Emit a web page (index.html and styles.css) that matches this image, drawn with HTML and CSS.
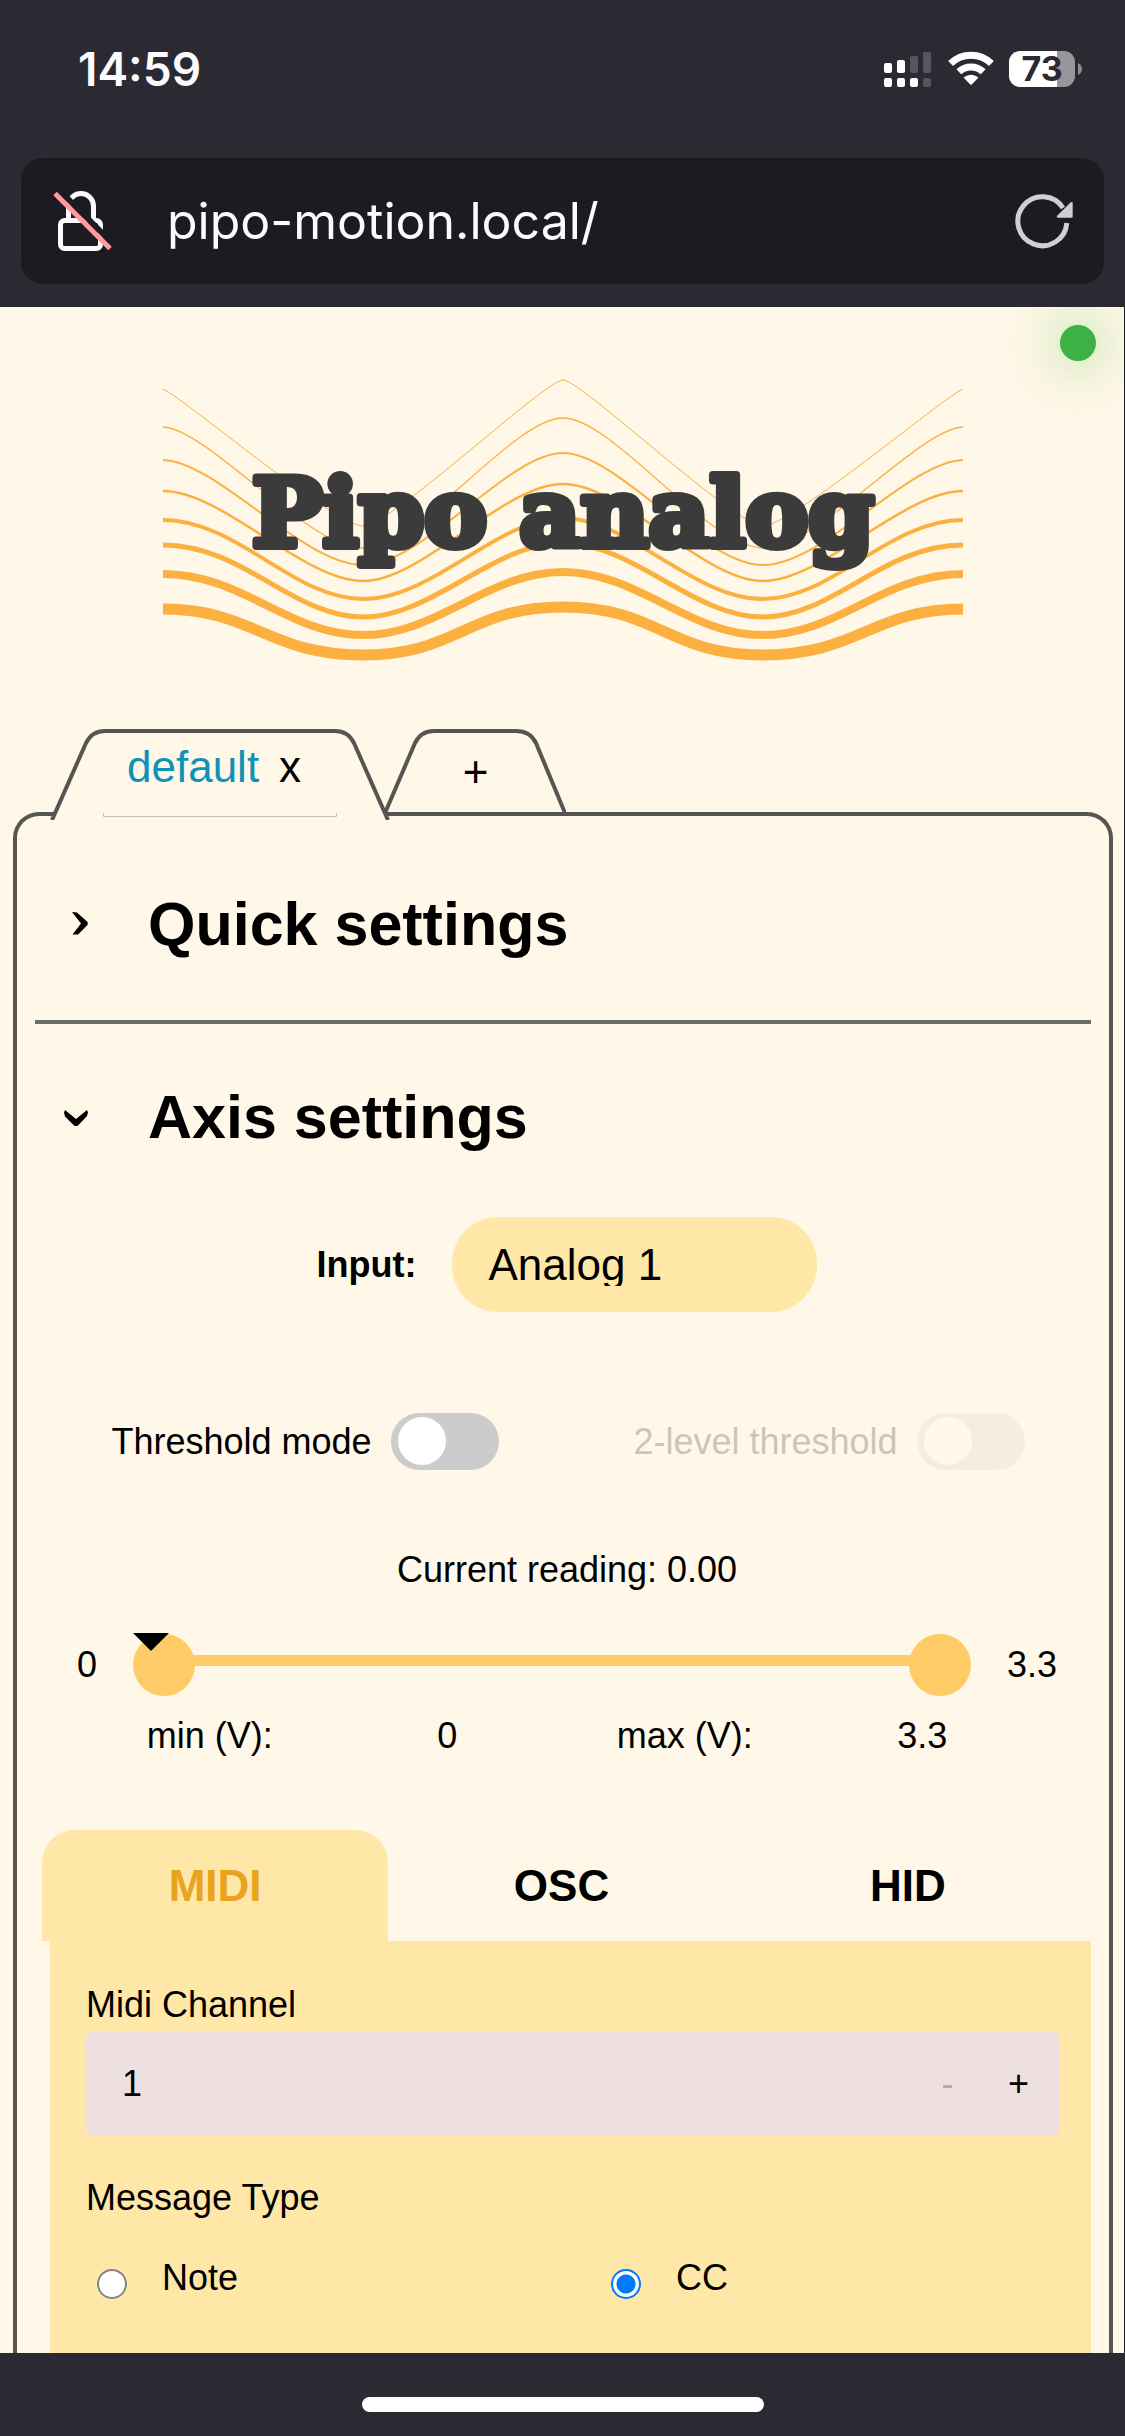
FILE: index.html
```html
<!DOCTYPE html>
<html lang="en">
<head>
<meta charset="utf-8">
<meta name="viewport" content="width=device-width, initial-scale=1">
<title>Pipo analog</title>
<link rel="stylesheet" href="styles.css">
</head>
<body>
<header class="browser">
  <div class="status">
    <span class="clock">14:59</span>
    <div class="indicators">
      <svg class="signal" width="50" height="36" viewBox="0 0 50 36" aria-hidden="true">
        <g fill="#fff"><rect x="2" y="12" width="8" height="10" rx="2"/><rect x="15" y="9" width="8" height="13" rx="2"/><rect x="2" y="27" width="8" height="9" rx="2"/><rect x="15" y="27" width="8" height="9" rx="2"/><rect x="28" y="27" width="8" height="9" rx="2"/></g>
        <g fill="#57555f"><rect x="28" y="5" width="8" height="17" rx="2"/><rect x="41" y="1" width="8" height="21" rx="2"/><rect x="41" y="27" width="8" height="9" rx="2"/></g>
      </svg>
      <svg class="wifi" width="46" height="36" viewBox="0 -1 46 36" aria-hidden="true">
        <path d="M2.600 11.600A29 29 0 0 1 43.400 11.600M10.800 19.800A18 18 0 0 1 35.200 19.800" fill="none" stroke="#fff" stroke-width="7"/>
        <path d="M15.500 25.500Q23 20 30.500 25.500L24 32.300Q23 33.300 22 32.300Z" fill="#fff"/>
      </svg>
      <span class="battery">73</span>
      <svg width="5" height="12" viewBox="0 0 5 12" aria-hidden="true"><path d="M0 0Q4 2 4 6T0 12Z" fill="#8f8e93"/></svg>
    </div>
  </div>
  <div class="urlbar">
    <svg width="62" height="66" viewBox="0 0 62 66" fill="none" aria-hidden="true">
      <rect x="8.500" y="32.500" width="40" height="28" rx="4" stroke="#fbfbfe" stroke-width="5"/>
      <path d="M16.500 32V18A12.500 12.500 0 0 1 41.500 18V32" stroke="#fbfbfe" stroke-width="5"/>
      <path d="M6 1L62 57" stroke="#1c1b22" stroke-width="6"/>
      <path d="M3 5.500L58 60.500" stroke="#ff9aa2" stroke-width="5"/>
    </svg>
    <span class="address">pipo-motion.local/</span>
    <button class="reload" type="button" aria-label="Reload">
      <svg width="60" height="56" viewBox="0 0 60 56" aria-hidden="true">
        <path d="M52.800 30A24.500 24.500 0 1 1 49 15" fill="none" stroke="#cfcfd8" stroke-width="5"/>
        <path d="M58.700 10V23.500Q58.700 24.700 57.500 24.700H44Q42 24.300 43.200 22.800L56.500 9.600Q58.700 8 58.700 10Z" fill="#cfcfd8"/>
      </svg>
    </button>
  </div>
</header>

<main class="page">
  <span class="online" role="img" aria-label="Connected"></span>
  <svg class="logo" width="800" height="290" viewBox="0 0 800 290" role="img" aria-label="Pipo analog">
    <g fill="none" stroke="#fbb040">
      <path stroke-width="1" d="M0 14C22 24 172 151 200 151S382 5 400 5S572 151 600 151S778 24 800 14"/>
      <path stroke-width="1.300" d="M0 52C45 54 145 173 200 173S350 43 400 43S545 173 600 173S755 54 800 52"/>
      <path stroke-width="2" d="M0 85C55 87 140 190 200 190S345 78 400 78S540 190 600 190S745 87 800 85"/>
      <path stroke-width="2.500" d="M0 116C60 116 140 206 200 206S340 109 400 109S540 206 600 206S740 116 800 116"/>
      <path stroke-width="3.800" d="M0 145C75 145 130 224 200 224S335 143 400 143S530 224 600 224S725 145 800 145"/>
      <path stroke-width="5" d="M0 170C80 170 130 242 200 242S330 168 400 168S530 242 600 242S720 170 800 170"/>
      <path stroke-width="8" d="M0 199C80 199 125 260 200 260S325 197 400 197S525 260 600 260S720 199 800 199"/>
      <path stroke-width="11" d="M0 234C90 234 105 280 200 280S305 232 400 232S505 280 600 280S710 234 800 234"/>
    </g>
    <text class="wordmark" x="400" y="171" text-anchor="middle">Pipo analog</text>
  </svg>

  <nav class="profiles" aria-label="Profiles">
    <div class="profile current">
      <svg class="shape" width="340" height="91" viewBox="0 0 340 91" aria-hidden="true">
        <path d="M2 91L36 14Q42 2 55 2H285Q298 2 304 14L338 91" fill="#fff7e8" stroke="#555552" stroke-width="4"/>
        <path d="M53.500 84V87.500H286.500V84" fill="none" stroke="#c9c2b4"/>
      </svg>
      <button class="name" type="button">default</button>
      <button type="button" aria-label="Close profile">x</button>
    </div>
    <button class="profile add" type="button" aria-label="Add profile">
      <svg class="shape" width="181" height="85" viewBox="0 0 181 85" aria-hidden="true">
        <path d="M0 84L30 14Q36 2 49 2H131Q145 2 151 14L180 84" fill="none" stroke="#555552" stroke-width="4"/>
      </svg>
      <span class="plus">+</span>
    </button>
  </nav>

  <section class="panel">
    <h2><button class="fold" type="button" aria-expanded="false">
      <svg width="24" height="26" viewBox="0 0 24 26" aria-hidden="true"><path d="M8 1L13 1.500L23.500 11Q24 12.500 23.500 14L14 23.500H8.500L17 12.500Z"/></svg>
      Quick settings</button></h2>
    <hr>
    <h2><button class="fold" type="button" aria-expanded="true">
      <svg width="24" height="26" viewBox="0 0 24 26" aria-hidden="true"><path d="M0 8.500L1 6L12 15L23 6L24 8.500L23 12L14 21.500Q12 22.500 10 21.500L1 12.500Z"/></svg>
      Axis settings</button></h2>

    <div class="axis">
      <div class="source">
        <label for="input">Input:</label>
        <select id="input"><option>Analog 1</option><option>Analog 2</option></select>
      </div>
      <div class="modes">
        <label class="mode">Threshold mode <input class="switch" type="checkbox"></label>
        <label class="mode off">2-level threshold <input class="switch" type="checkbox" disabled></label>
      </div>
      <p class="reading">Current reading: 0.00</p>
      <div class="range">
        <span>0</span>
        <div class="slider">
          <span class="track"></span>
          <input type="range" min="0" max="3.3" step="0.1" value="0" aria-label="Minimum voltage">
          <input type="range" min="0" max="3.3" step="0.1" value="3.3" aria-label="Maximum voltage">
          <svg class="marker" width="36" height="18" viewBox="0 0 36 18" aria-hidden="true"><path d="M0 0H36L18 18Z"/></svg>
        </div>
        <span>3.3</span>
      </div>
      <div class="limits">
        <label for="min">min (V):</label><input id="min" type="text" value="0">
        <label for="max">max (V):</label><input id="max" type="text" value="3.3">
      </div>
    </div>

    <div class="protocols" role="tablist">
      <button role="tab" aria-selected="true" type="button">MIDI</button>
      <button role="tab" aria-selected="false" type="button">OSC</button>
      <button role="tab" aria-selected="false" type="button">HID</button>
    </div>
    <div class="midi" role="tabpanel">
      <label for="channel">Midi Channel</label>
      <div class="stepper">
        <input id="channel" type="text" value="1">
        <button type="button" disabled>-</button>
        <button type="button">+</button>
      </div>
      <fieldset>
        <legend>Message Type</legend>
        <div class="types">
          <label><input type="radio" name="type">Note</label>
          <label><input type="radio" name="type" checked>CC</label>
        </div>
      </fieldset>
    </div>
  </section>
</main>

<footer class="home"><span class="grip"></span></footer>
</body>
</html>
```
FILE: styles.css
```css
* { box-sizing: border-box; }

body {
  margin: 0;
  min-height: 100vh;
  display: flex;
  flex-direction: column;
  background: #2b2a33;
  color: #000;
  font: 36px/42px "Liberation Sans", Arial, sans-serif;
}

button, input, select {
  margin: 0;
  padding: 0;
  border: 0;
  border-radius: 0;
  background: none;
  color: inherit;
  font: inherit;
}

svg { display: block; flex: none; }

/* browser chrome */
.browser {
  padding: 0 21px 23px;
  color: #fbfbfe;
  font-family: Inter, sans-serif;
}
.status {
  display: flex;
  justify-content: space-between;
  align-items: center;
  height: 138px;
  margin-bottom: 20px;
  padding: 0 21px 0 57px;
}
.clock { font-size: 46px; font-weight: 600; }
.indicators { display: flex; align-items: center; }
.wifi { margin: 0 15px 0 16px; }
.battery {
  width: 66px;
  height: 36px;
  margin-right: 3px;
  border-radius: 11px;
  background: linear-gradient(90deg, #fff 73%, #97969b 73%);
  color: #2b2a33;
  font-size: 34px;
  font-weight: 700;
  line-height: 36px;
  text-align: center;
}
.urlbar {
  display: flex;
  align-items: center;
  height: 126px;
  padding: 0 30px 0 31px;
  border-radius: 22px;
  background: #1c1b22;
}
.address { flex: 1; margin-left: 53px; font-size: 50px; line-height: 60px; }

/* page */
.page {
  position: relative;
  flex: 1;
  display: flex;
  flex-direction: column;
  overflow: hidden;
  padding: 68px 11px 0 13px;
  border-right: 1px solid #1c1b22;
  background: #fff7e8;
}
.online {
  position: absolute;
  top: 18px;
  right: 28px;
  width: 36px;
  height: 36px;
  border-radius: 50%;
  background: #3db046;
  box-shadow: 0 0 50px 4px rgba(92, 200, 80, .55);
}
.logo { align-self: center; max-width: 100%; }
.wordmark {
  fill: #3b3b3b;
  stroke: #3b3b3b;
  stroke-width: 8px;
  stroke-linejoin: round;
  font: 700 94px "DejaVu Serif", serif;
}

.profiles {
  position: relative;
  display: flex;
  align-items: flex-start;
  margin: 64px 0 -8px 37px;
  font-size: 44px;
  line-height: 48px;
}
.profile { position: relative; isolation: isolate; }
.shape { position: absolute; top: 0; left: 0; z-index: -1; }
.current {
  z-index: 1;
  display: flex;
  gap: 20px;
  width: 340px;
  height: 91px;
  padding: 14px 0 29px 77px;
}
.name { color: #0f92b8; }
.add { width: 181px; height: 85px; margin-left: -5px; }

.panel {
  flex: 1;
  padding: 73px 18px 0;
  border: 4px solid #555552;
  border-bottom: 0;
  border-radius: 26px 26px 0 0;
}
h2 { margin: 0; font-size: 61px; line-height: 70px; }
.fold {
  display: flex;
  align-items: center;
  gap: 60px;
  width: 100%;
  padding-left: 29px;
  text-align: left;
}
hr { height: 4px; margin: 61px 0 58px; border: 0; background: #6b6e6b; }

.axis { padding-left: 8px; }
.source {
  display: flex;
  justify-content: center;
  align-items: center;
  gap: 36px;
  margin-top: 65px;
  font-weight: 700;
}
.source select {
  appearance: none;
  width: 365px;
  height: 95px;
  padding: 0 36px;
  border-radius: 46px;
  background: #ffe7a8;
  font-size: 44px;
  font-weight: 400;
}
.modes { display: grid; grid-template-columns: 1fr 1fr; margin-top: 101px; }
.mode { display: flex; justify-content: center; align-items: center; gap: 19px; }
.off { opacity: .2; }
.switch {
  appearance: none;
  width: 108px;
  height: 57px;
  padding: 4px 7px;
  border-radius: 29px;
  background: #ccc;
}
.switch::before {
  content: "";
  display: block;
  width: 48px;
  height: 48px;
  border-radius: 50%;
  background: #fff;
}
.reading { margin: 79px 0 42px; text-align: center; }

.range { display: flex; align-items: center; gap: 36px; padding: 0 34px; }
.slider { position: relative; flex: 1; display: grid; align-items: center; height: 63px; }
.slider > input, .track { grid-area: 1 / 1; }
.slider > input { appearance: none; width: 100%; height: 62px; pointer-events: none; }
.slider > input::-webkit-slider-thumb {
  appearance: none;
  width: 62px;
  height: 62px;
  border-radius: 50%;
  background: #ffcb66;
  pointer-events: auto;
}
.track { height: 11px; margin: 0 31px 8px; background: #ffcb66; }
.marker { position: absolute; top: 0; left: 0; }

.limits {
  display: grid;
  grid-template-columns: repeat(4, 1fr);
  margin: 19px 50px 0 48px;
  text-align: center;
}
.limits input { min-width: 0; text-align: center; }

.protocols {
  display: grid;
  grid-template-columns: repeat(3, 1fr);
  margin: 73px 10px 0 7px;
}
.protocols button {
  height: 111px;
  border-radius: 33px 33px 0 0;
  font-size: 44px;
  font-weight: 700;
}
.protocols [aria-selected="true"] { background: #ffe7a8; color: #e9a31e; }

.midi { margin-left: 15px; padding: 43px 31px 54px 36px; background: #ffe7a8; }
.midi > label { display: block; }
.stepper {
  display: flex;
  height: 103px;
  margin: 6px 0 42px;
  padding: 0 6px 0 36px;
  border-radius: 6px;
  background: #eee0e0;
}
.stepper input { flex: 1; min-width: 0; }
.stepper button { width: 71px; }
.stepper button:disabled { color: #b5adad; }

fieldset { margin: 0; padding: 0; border: 0; }
legend { padding: 0; }
.types { display: grid; grid-template-columns: 1fr 1fr; gap: 54px; padding-top: 38px; }
.types label { display: flex; align-items: flex-end; gap: 35px; padding-left: 11px; }
.types input {
  appearance: none;
  width: 30px;
  height: 30px;
  border: 2px solid #858585;
  border-radius: 50%;
  background: #fff;
}
.types input:checked {
  border-color: #0078ff;
  background: radial-gradient(circle, #0078ff 9px, #fff 10px);
}

.home { display: flex; justify-content: center; padding: 44px 0 24px; }
.grip { width: 402px; height: 15px; border-radius: 8px; background: #fff; }
```
